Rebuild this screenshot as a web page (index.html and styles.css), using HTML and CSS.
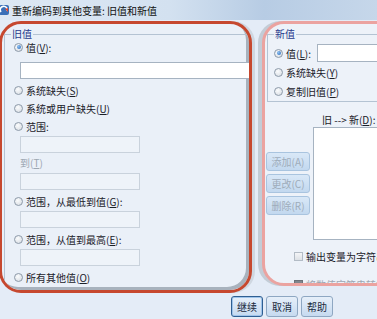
FILE: index.html
```html
<!DOCTYPE html>
<html lang="zh">
	<head>
		<meta charset="utf-8" />
		<meta name="viewport" content="width=device-width, initial-scale=1.0" />
		<title>旧值和新值</title>
		<link rel="stylesheet" href="styles.css">
	</head>

	<body>
		<div class="titlebar">
			<svg class="app-icon" width="11" height="12" viewBox="0 0 11 12">
				<rect x="0" y="1" width="10" height="10" rx="2" fill="#3a6fb8" />
				<path d="M2 8 A3.5 3.5 0 1 1 8 7" fill="none" stroke="#fff" stroke-width="1.6" />
				<path d="M6 5 L9 8 L9 4 Z" fill="#e0452c" />
			</svg>
			<span>重新编码到其他变量: 旧值和新值</span>
		</div>

		<div class="main">
			<section class="panel panel-old">
				<fieldset class="group group-old">
					<legend>旧值</legend>
					<label class="opt first"><span class="radio on"></span>值(<u>V</u>):</label>
					<div class="field wide"></div>
					<label class="opt"><span class="radio"></span>系统缺失(<u>S</u>)</label>
					<label class="opt"><span class="radio"></span>系统或用户缺失(<u>U</u>)</label>
					<label class="opt"><span class="radio"></span>范围:</label>
					<div class="field"></div>
					<div class="sub dim">到(<u>T</u>)</div>
					<div class="field"></div>
					<label class="opt"><span class="radio"></span>范围，从最低到值(<u>G</u>):</label>
					<div class="field tight"></div>
					<label class="opt"><span class="radio"></span>范围，从值到最高(<u>E</u>):</label>
					<div class="field tight"></div>
					<label class="opt"><span class="radio"></span>所有其他值(<u>O</u>)</label>
				</fieldset>
			</section>

			<section class="panel panel-new">
				<fieldset class="group group-new">
					<legend>新值</legend>
					<div class="row-value">
						<label class="opt"><span class="radio on"></span>值(<u>L</u>):</label>
						<div class="field value"></div>
					</div>
					<label class="opt"><span class="radio"></span>系统缺失(<u>Y</u>)</label>
					<label class="opt last"><span class="radio"></span>复制旧值(<u>P</u>)</label>
				</fieldset>

				<div class="mapping">
					<div class="map-buttons">
						<button class="btn-map">添加(A)</button>
						<button class="btn-map">更改(C)</button>
						<button class="btn-map">删除(R)</button>
					</div>
					<div class="map-list">
						<div class="map-label">旧 --&gt; 新(<u>D</u>):</div>
						<div class="list"></div>
					</div>
				</div>

				<label class="check"><span class="box"></span>输出变量为字符串(<u>B</u>)</label>
				<label class="check dim"><span class="box dark"></span>将数值字符串转换为数字</label>
			</section>
		</div>

		<div class="footer">
			<button class="btn focus">继续</button>
			<button class="btn">取消</button>
			<button class="btn">帮助</button>
		</div>
	</body>
</html>
```

FILE: styles.css
```css
body {
	margin: 0;
	width: 377px;
	height: 319px;
	overflow: hidden;
	background: #e4ecf7;
	font-family: "Noto Sans CJK SC", "Noto Sans", sans-serif;
	font-size: 10px;
	color: #1a2029;
}

u {
	text-decoration: underline;
	text-underline-offset: 1px;
}

.titlebar {
	height: 20px;
	display: flex;
	align-items: center;
	gap: 2px;
	background: linear-gradient(90deg, #dde8f4 0%, #d3e1f0 45%, #b7cce4 70%, #c6d7ea 100%);
	font-size: 10px;
	color: #111;
}

.app-icon {
	margin-left: -1px;
}

.main {
	display: flex;
	align-items: flex-start;
	margin-top: 1px;
}

.panel {
	box-sizing: border-box;
	border-radius: 22px;
	overflow: hidden;
	flex-shrink: 0;
}

.panel-old {
	width: 253px;
	height: 272px;
	margin-left: -1px;
	padding-top: 4px;
	border: 3px solid #c6482f;
	background: #eaf0f8;
	box-shadow: inset -3px -3px 0 #a8b2bd, 3px 0 0 #cfd7e1;
}

.panel-new {
	width: 140px;
	height: 265px;
	margin-left: 10px;
	padding-top: 4px;
	border: 3px solid #eba3a0;
	background: #edf2f9;
	box-shadow: -4px 0 0 #c3ccd6;
}

.group {
	margin: 0 0 0 2px;
	padding: 0 0 0 6px;
	border: 1px solid #b4c3d3;
	border-right: none;
	min-width: 0;
}

.group legend {
	padding: 0 1px;
	line-height: 12px;
	color: #283a8c;
}

.group-old {
	border-bottom: none;
	height: 300px;
}

.group-new {
	padding-bottom: 3px;
}

.opt {
	display: flex;
	align-items: center;
	height: 14px;
	margin-top: 4px;
	white-space: nowrap;
}

.group-old .opt {
	padding-left: 3px;
}

.group-old .opt.first {
	margin-top: 0;
}

.group-new .opt {
	margin-top: 3px;
}

.group-new .opt.last {
	margin-top: 5px;
}

.radio {
	box-sizing: border-box;
	width: 9px;
	height: 9px;
	margin-right: 3px;
	border: 1px solid #8d9aa9;
	border-radius: 50%;
	background: radial-gradient(circle at 40% 35%, #fbfcfd, #d3d9e0);
	display: flex;
	align-items: center;
	justify-content: center;
	flex-shrink: 0;
}

.radio.on::before {
	content: "";
	width: 4px;
	height: 4px;
	border-radius: 50%;
	background: radial-gradient(circle at 35% 35%, #8ec0f0, #2364b8);
}

.field {
	box-sizing: border-box;
	width: 120px;
	height: 17px;
	margin: 3px 0 0 9px;
	border: 1px solid #c9d2dc;
	background: #eef3f9;
}

.field.wide {
	width: 238px;
	margin-top: 8px;
	border-color: #a6b3c1;
	background: #fff;
}

.field.tight {
	margin-top: 3px;
}

.sub {
	height: 14px;
	line-height: 14px;
	margin: 3px 0 0 9px;
}

.dim {
	color: #9da7b2;
}

.row-value {
	display: flex;
	align-items: center;
	height: 18px;
	margin-top: 4px;
}

.row-value .opt {
	margin-top: 0;
}

.field.value {
	width: 80px;
	height: 18px;
	margin: 0 0 0 6px;
	border-color: #a6b3c1;
	background: #fff;
}

.mapping {
	display: flex;
	gap: 3px;
	padding-left: 1px;
}

.map-buttons {
	display: flex;
	flex-direction: column;
	gap: 3px;
	padding-top: 50px;
}

.btn-map {
	width: 44px;
	height: 19px;
	padding: 0;
	border: 1px solid #a9c4df;
	border-radius: 3px;
	background: linear-gradient(#d9e8f7, #c2d8ef);
	font-family: inherit;
	font-size: 10px;
	color: #9eacba;
}

.map-list {
	flex: 1;
}

.map-label {
	height: 14px;
	line-height: 14px;
	margin-top: 11px;
	padding-left: 9px;
	white-space: nowrap;
}

.list {
	height: 111px;
	border: 1px solid #a6b3c1;
	border-right: none;
	background: #fff;
}

.check {
	display: flex;
	align-items: center;
	height: 14px;
	margin-top: 9px;
	padding-left: 29px;
	white-space: nowrap;
}

.check.dim {
	margin-top: 14px;
}

.box {
	box-sizing: border-box;
	width: 9px;
	height: 9px;
	margin-right: 3px;
	border: 1px solid #b3bcc6;
	background: linear-gradient(#f4f5f7, #dde1e6);
	flex-shrink: 0;
}

.box.dark {
	border-color: #6b7178;
	background: #80868d;
}

.footer {
	display: flex;
	gap: 3px;
	margin-top: 3px;
	padding-left: 231px;
}

.btn {
	width: 32px;
	height: 21px;
	padding: 0;
	border: 1px solid #8ea7c2;
	border-radius: 3px;
	background: linear-gradient(#e6eff9, #c6daf0);
	font-family: inherit;
	font-size: 10px;
	color: #1b2b3d;
}

.btn.focus {
	border-color: #2f5f92;
	box-shadow: inset 0 0 0 1px #9fc4ea;
}
```
